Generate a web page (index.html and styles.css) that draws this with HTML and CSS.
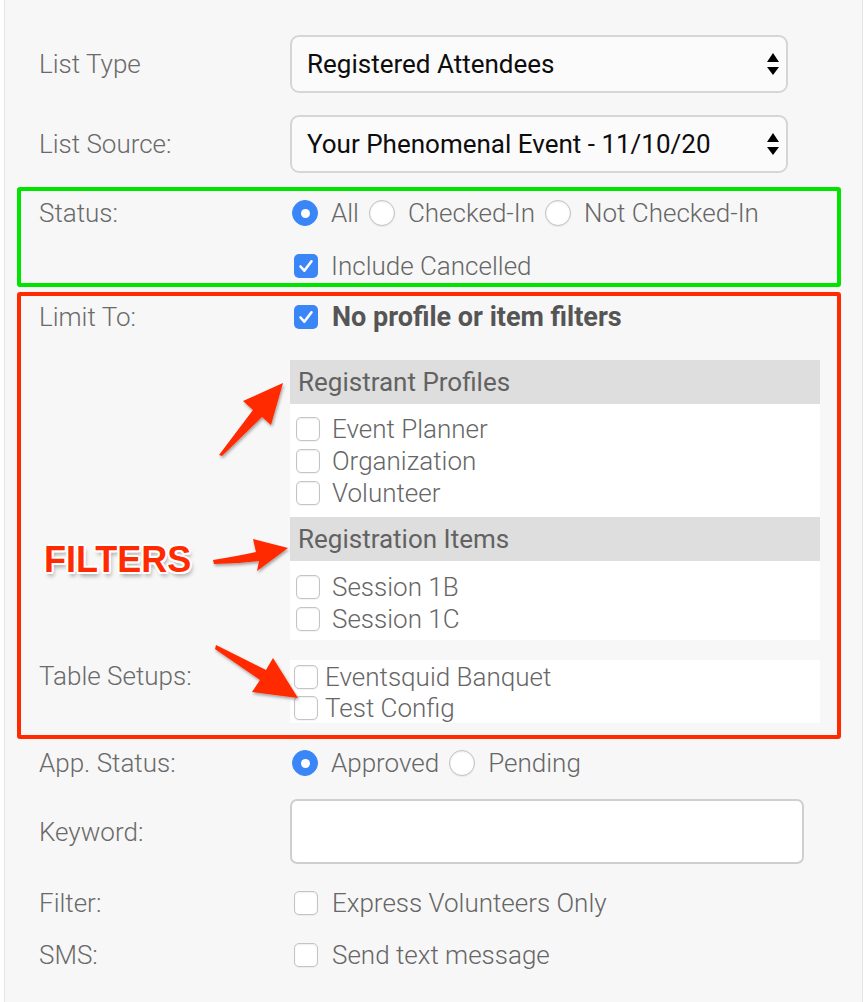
FILE: index.html
```html
<!DOCTYPE html>
<html lang="en">
<head>
<meta charset="utf-8">
<title>List Builder</title>
<link rel="stylesheet" href="styles.css">
</head>
<body>
<div class="page">
  <div class="panel">
    <div class="row">
      <div class="label">List Type</div>
      <div class="select">
        <span>Registered Attendees</span>
        <svg class="updown" width="12" height="22" viewBox="0 0 12 22"><polygon points="0,9 6,0 12,9" fill="#000"/><polygon points="0,14 12,14 6,22" fill="#000"/></svg>
      </div>
    </div>
    <div class="row gap22">
      <div class="label">List Source:</div>
      <div class="select">
        <span>Your Phenomenal Event - 11/10/20</span>
        <svg class="updown" width="12" height="22" viewBox="0 0 12 22"><polygon points="0,9 6,0 12,9" fill="#000"/><polygon points="0,14 12,14 6,22" fill="#000"/></svg>
      </div>
    </div>

    <div class="box green">
      <div class="row line">
        <div class="label">Status:</div>
        <div class="opts">
          <span class="radio on"></span><span class="opt">All</span>
          <span class="radio"></span><span class="opt">Checked-In</span>
          <span class="radio"></span><span class="opt">Not Checked-In</span>
        </div>
      </div>
      <div class="row line gap21">
        <div class="label"></div>
        <div class="opts">
          <span class="cb on"><svg width="24" height="24" viewBox="0 0 24 24"><path d="M6.5 12.5l3.8 4.2 7.2-9.4" fill="none" stroke="#fff" stroke-width="2.6" stroke-linecap="round" stroke-linejoin="round"/></svg></span><span class="opt">Include Cancelled</span>
        </div>
      </div>
    </div>

    <div class="box red">
      <div class="row line">
        <div class="label">Limit To:</div>
        <div class="opts">
          <span class="cb on wide"><svg width="24" height="24" viewBox="0 0 24 24"><path d="M6.5 12.5l3.8 4.2 7.2-9.4" fill="none" stroke="#fff" stroke-width="2.6" stroke-linecap="round" stroke-linejoin="round"/></svg></span><span class="opt bold">No profile or item filters</span>
        </div>
      </div>
      <div class="row top gap27">
        <div class="label"></div>
        <div class="lists">
          <div class="lhead">Registrant Profiles</div>
          <div class="lbody first">
            <div class="item"><span class="cb"></span><span class="opt">Event Planner</span></div>
            <div class="item"><span class="cb"></span><span class="opt">Organization</span></div>
            <div class="item"><span class="cb"></span><span class="opt">Volunteer</span></div>
          </div>
          <div class="lhead">Registration Items</div>
          <div class="lbody second">
            <div class="item"><span class="cb"></span><span class="opt">Session 1B</span></div>
            <div class="item"><span class="cb"></span><span class="opt">Session 1C</span></div>
          </div>
        </div>
      </div>
      <div class="row top gap20">
        <div class="label tlabel">Table Setups:</div>
        <div class="lbody tables">
          <div class="item tight"><span class="cb"></span><span class="opt">Eventsquid Banquet</span></div>
          <div class="item tight"><span class="cb"></span><span class="opt">Test Config</span></div>
        </div>
      </div>
    </div>

    <div class="row line gap8">
      <div class="label">App. Status:</div>
      <div class="opts">
        <span class="radio on"></span><span class="opt">Approved</span>
        <span class="radio"></span><span class="opt">Pending</span>
      </div>
    </div>
    <div class="row gap20">
      <div class="label">Keyword:</div>
      <div class="input"></div>
    </div>
    <div class="row line gap23">
      <div class="label">Filter:</div>
      <div class="opts"><span class="cb wide"></span><span class="opt">Express Volunteers Only</span></div>
    </div>
    <div class="row line gap20">
      <div class="label">SMS:</div>
      <div class="opts"><span class="cb wide"></span><span class="opt">Send text message</span></div>
    </div>
  </div>

  <div class="filters">FILTERS</div>
  <svg class="arrows" width="868" height="1002" viewBox="0 0 868 1002">
    <defs>
      <filter id="sh" x="-20%" y="-20%" width="140%" height="140%">
        <feDropShadow dx="1" dy="2" stdDeviation="1.5" flood-color="#000" flood-opacity="0.35"/>
      </filter>
    </defs>
    <g fill="#ff2a00" filter="url(#sh)">
      <path d="M219,455 L253,410 L243,401 L283,383 L271,425 L262,417 L222,456 Z"/>
      <path d="M213,560 Q238,556 256,552 L253,539 L288,548 L257,571 L259,561 Q236,564 214,564 Z"/>
      <path d="M216,645 L266,670 L273,658 L298,698 L252,692 L260,680 L215,649 Z"/>
    </g>
  </svg>
</div>
</body>
</html>
```

FILE: styles.css
```css
* { box-sizing: border-box; }

body {
  margin: 0;
  background: #ffffff;
  font-family: Roboto, "Liberation Sans", Arial, sans-serif;
}

.page {
  position: relative;
  width: 868px;
  min-height: 1002px;
  overflow: hidden;
}

.panel {
  margin-left: 4px;
  width: 859px;
  min-height: 1002px;
  background: #f7f7f7;
  border-left: 1px solid #e4e4e4;
  border-right: 1px solid #e4e4e4;
  padding: 35px 0 20px 12px;
}

.row {
  display: grid;
  grid-template-columns: 251px 1fr;
  align-items: center;
  padding-left: 22px;
}

.row.top { align-items: start; }
.row.line { min-height: 32px; }

.gap8 { margin-top: 8px; }
.gap20 { margin-top: 20px; }
.gap21 { margin-top: 21px; }
.gap22 { margin-top: 22px; }
.gap23 { margin-top: 23px; }
.gap27 { margin-top: 27px; }

.label {
  font-size: 26px;
  font-weight: 300;
  color: #6a6a6a;
  line-height: 32px;
}

.select {
  width: 498px;
  height: 58px;
  border: 2px solid #d6d6d6;
  border-radius: 9px;
  background: #fbfbfb;
  display: flex;
  align-items: center;
  justify-content: space-between;
  padding: 0 7px 0 15px;
  font-size: 26px;
  color: #0d0d0d;
}

.box {
  width: 824px;
  border: 4px solid;
  border-radius: 3px;
}
.box .row { padding-left: 18px; }

.green {
  border-color: #00e400;
  margin-top: 14px;
  padding: 6px 0 1px;
}

.red {
  border-color: #ff2a00;
  margin-top: 5px;
  padding: 5px 0 12px;
}

.opts {
  display: flex;
  align-items: center;
  height: 32px;
}

.opt {
  font-size: 26px;
  font-weight: 300;
  color: #666;
  line-height: 32px;
  white-space: nowrap;
}
.opts .opt { margin-right: 8px; }
.opt.bold { font-weight: 700; color: #555; font-size: 27px; }

.radio {
  width: 26px;
  height: 26px;
  border-radius: 50%;
  background: #fff;
  border: 1.5px solid #c2c2c2;
  box-shadow: inset 0 1px 2px rgba(0,0,0,0.08), 0 1px 1px rgba(0,0,0,0.06);
  margin: 0 13px 0 2px;
  flex: none;
  display: flex;
  align-items: center;
  justify-content: center;
}
.radio.on {
  background: #3a86f7;
  border-color: #3a86f7;
  box-shadow: none;
}
.radio.on::after {
  content: "";
  width: 9px;
  height: 9px;
  border-radius: 50%;
  background: #fff;
}

.cb {
  width: 24px;
  height: 24px;
  border-radius: 5px;
  background: #fff;
  border: 1.5px solid #c4c4c4;
  box-shadow: inset 0 1px 2px rgba(0,0,0,0.07), 0 1px 1px rgba(0,0,0,0.05);
  flex: none;
  display: flex;
  align-items: center;
  justify-content: center;
  margin-right: 12px;
}
.cb.on {
  background: #3a86f7;
  border: none;
  box-shadow: none;
}
.opts .cb { margin-left: 4px; margin-right: 13px; }
.opts .cb.wide { margin-right: 14px; }

.lists { width: 530px; }

.lhead {
  height: 44px;
  background: #dedede;
  padding-left: 8px;
  font-size: 26px;
  color: #626262;
  display: flex;
  align-items: center;
}

.lbody {
  background: #fff;
  padding-left: 6px;
}
.lbody.first { padding-top: 9px; padding-bottom: 8px; }
.lbody.second { padding-top: 10px; padding-bottom: 5px; }

.lbody.tables {
  width: 530px;
  height: 63px;
  padding: 1px 0 0 4px;
}

.item {
  display: flex;
  align-items: center;
  height: 32px;
}
.item.tight { height: 31px; }
.item.tight .cb { margin-right: 7px; }

.tlabel { padding-top: 1px; line-height: 31px; }

.input {
  width: 514px;
  height: 65px;
  background: #fff;
  border: 2px solid #cfcfcf;
  border-radius: 7px;
}

.filters {
  position: absolute;
  left: 44px;
  top: 535px;
  font-family: "Liberation Sans", Arial, sans-serif;
  font-weight: 700;
  font-size: 36px;
  line-height: 50px;
  color: #ff2a00;
  text-shadow:
    2px 0 0 #fff, -2px 0 0 #fff, 0 2px 0 #fff, 0 -2px 0 #fff,
    1.5px 1.5px 0 #fff, -1.5px 1.5px 0 #fff, 1.5px -1.5px 0 #fff, -1.5px -1.5px 0 #fff,
    2px 4px 4px rgba(0,0,0,0.35);
}

.arrows {
  position: absolute;
  left: 0;
  top: 0;
  pointer-events: none;
}
```
